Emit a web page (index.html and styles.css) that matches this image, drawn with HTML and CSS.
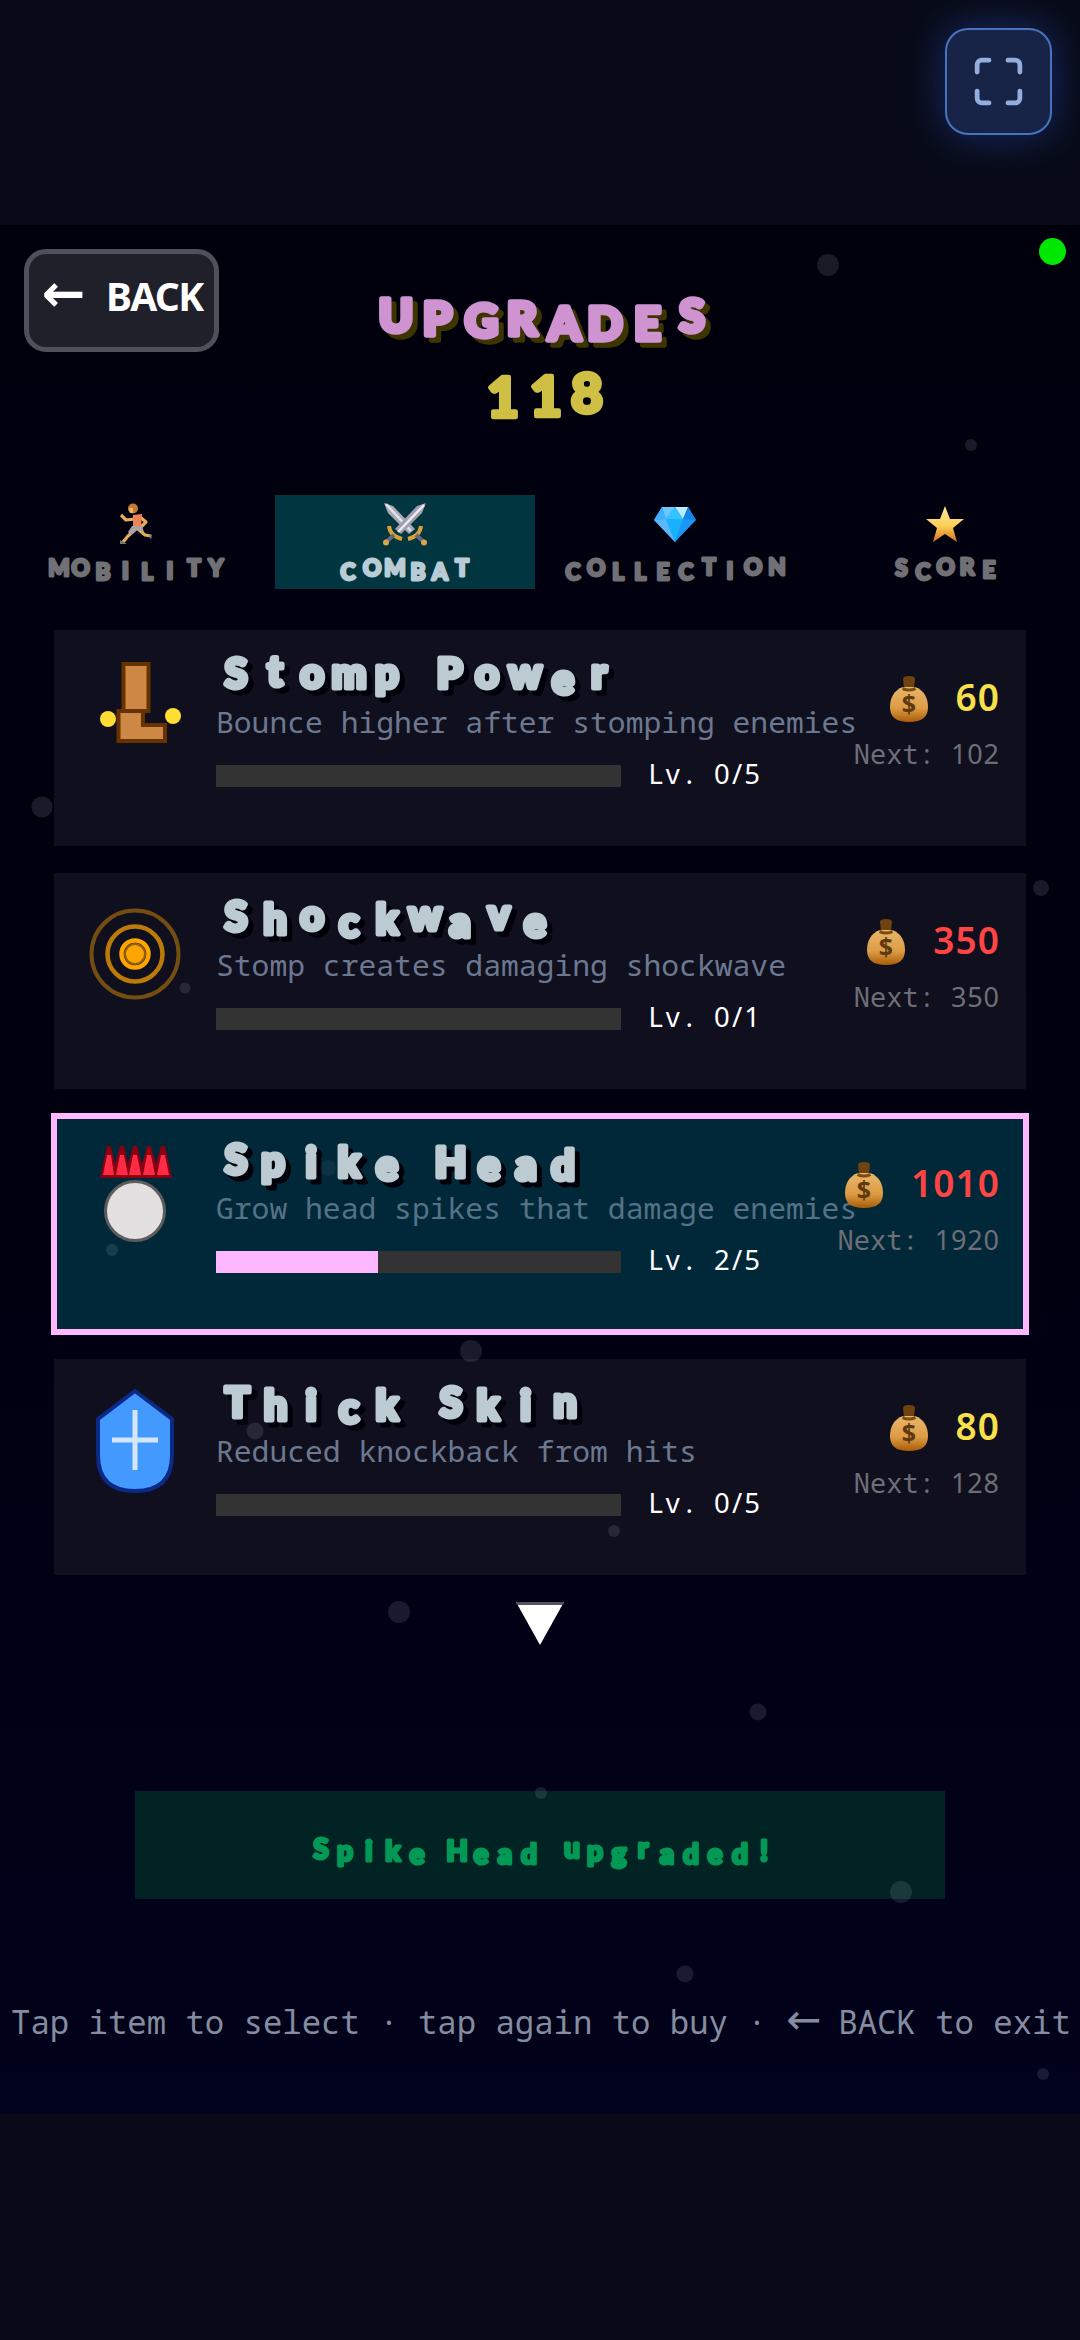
FILE: index.html
```html
<!DOCTYPE html>
<html lang="en">
<head>
<meta charset="utf-8">
<title>Upgrades</title>
<link rel="stylesheet" href="styles.css">
</head>
<body>
<svg class="defs" width="0" height="0">
  <linearGradient id="bagFill" x1="0" y1="0" x2="0" y2="1"><stop offset="0" stop-color="#e8b66b"/><stop offset=".6" stop-color="#dd9c45"/><stop offset="1" stop-color="#a85d08"/></linearGradient>
  <symbol id="bag" viewBox="0 0 40 46">
    <path d="M15 12L14 3Q14 0 20 0T26 3L25 12Z" fill="#6e4310"/>
    <path d="M14 11H26C35 14 39 22 39 31C39 41 33 46 20 46S1 41 1 31C1 22 5 14 14 11Z" fill="url(#bagFill)"/>
    <path d="M14 11q6 3 12 0l1 3q-7 3-14 0z" fill="#7a4c12"/>
  </symbol>
</svg>
<div class="topbar">
  <button class="fullscreen">
    <svg width="57" height="57" viewBox="0 0 24 24"><path d="M8 3H5a2 2 0 0 0-2 2v3M21 8V5a2 2 0 0 0-2-2h-3M3 16v3a2 2 0 0 0 2 2h3M16 21h3a2 2 0 0 0 2-2v-3"/></svg>
  </button>
</div>
<main class="game">
  <header class="head">
    <button class="back"><span class="arrow">←</span> <span class="caps">BACK</span></button>
    <div class="titles">
      <svg class="wobble title" width="360" height="128">
        <text x="36 77.500 121.500 162 204.500 245 287.500 332" y="107 110 112 110 115 115 115 107">UPGRADES</text>
      </svg>
      <svg class="wobble coins" width="360" height="80">
        <text x="143 186 227" y="64 63 60">118</text>
      </svg>
    </div>
    <span class="status"></span>
  </header>

  <nav class="tabs">
    <div class="tab">
      <svg width="44" height="44" viewBox="0 0 44 44">
        <path d="M22 17L13 18L8 13M27 15L33 20L28 25M24 26L15 34L10 40M25 27L32 33L38 34" fill="none" stroke="#e5ac5b" stroke-width="3.2" stroke-linejoin="round"/>
        <path d="M20 13L29 12L28 26L20 25Z" fill="#ee8455"/><path d="M19 24H29L31 30L24 28L18 33L15 30Z" fill="#a7a3a8"/>
        <circle cx="20" cy="6.500" r="5" fill="#c77a35"/><path d="M16 6H20V11H17Z" fill="#edb963"/><path d="M7 38l7 4H7zM36 32l3 1-1 5z" fill="#777"/>
      </svg>
      <svg class="wobble label" width="260" height="43"><text x="54 75.500 98 120.500 142 165 189 211" y="30 30 34 33 34 33 30 30">MOBILITY</text></svg>
    </div>
    <div class="tab active">
      <svg width="44" height="44" viewBox="0 0 44 44">
        <path d="M1 1L10 4L32 27L26 32L5 11Z" fill="#aaa9b8"/><path d="M3 2L28 29" stroke="#e2e2ea" stroke-width="2.500"/>
        <path d="M43 1L34 4L12 27L18 32L39 11Z" fill="#a09fae"/><path d="M41 3L15 30" stroke="#ecebf2" stroke-width="2.500"/>
        <path d="M6 24Q7 34 19 37M38 24Q37 34 25 37" fill="none" stroke="#d9a13c" stroke-width="4"/>
        <path d="M11 33L3 40M33 33L41 40" stroke="#666779" stroke-width="4"/><circle cx="3" cy="40.500" r="3" fill="#d8a54a"/><circle cx="41" cy="40.500" r="3" fill="#d8a54a"/>
      </svg>
      <svg class="wobble label" width="260" height="43"><text x="73 97 120 143 165 187" y="34 30 30 34 34 30">COMBAT</text></svg>
    </div>
    <div class="tab">
      <svg width="44" height="44" viewBox="0 0 44 44">
        <path d="M9 5H35L43 18L22 40L1 18Z" fill="#1d96f5"/><path d="M9 5L13 17L1 18Z" fill="#3db1ff"/><path d="M9 5H22L13 17Z" fill="#6cc9ff"/><path d="M22 5H35L30 17Z" fill="#b9ecff"/><path d="M22 5L30 17H13Z" fill="#35c3fb"/><path d="M35 5L43 18L30 17Z" fill="#1784e8"/><path d="M13 17H30L22 40Z" fill="#18b1fb"/><path d="M1 18L13 17L22 40Z" fill="#5bb7f8"/>
      </svg>
      <svg class="wobble label" width="260" height="43"><text x="28 51 73 95 118 141 164 185 208 232" y="34 30 34 34 34 34 29 33 29 29">COLLECTION</text></svg>
    </div>
    <div class="tab">
      <svg width="44" height="44" viewBox="0 0 44 44">
        <linearGradient id="starFill" x1="0" y1="0" x2="0" y2="1"><stop offset="0" stop-color="#fbe6a0"/><stop offset=".55" stop-color="#fad155"/><stop offset="1" stop-color="#d66d1c"/></linearGradient>
        <path d="M22 4L27 17H41L30 26L34 40L22 32L10 40L14 26L3 17H17Z" fill="url(#starFill)"/>
      </svg>
      <svg class="wobble label" width="260" height="43"><text x="86.500 108 130.500 152 174" y="30 34 29 29 32">SCORE</text></svg>
    </div>
  </nav>

  <section class="list">
    <article class="card">
      <svg class="icon" width="108" height="150">
        <g fill="#cc8844" stroke="#663300" stroke-width="4"><rect x="42.500" y="34" width="25" height="47"/><path d="M37.500 81H62V95H84V111H37.500Z"/></g>
        <circle cx="27" cy="89" r="8" fill="#ffdd33"/><circle cx="92" cy="86" r="8" fill="#ffdd33"/>
      </svg>
      <div class="body">
        <svg class="wobble name" width="440" height="73"><text x="20 59 96 133 171 200 233.500 271 309 347 383" y="58 56 58 58 58 58 58 58 58 64 58">Stomp Power</text></svg>
        <p class="desc">Bounce higher after stomping enemies</p>
        <div class="level"><div class="bar"></div><div>Lv. <span class="num">0/5</span></div></div>
      </div>
      <div class="cost">
        <div class="price ok"><svg width="40" height="46"><use href="#bag"/><text x="20" y="37">$</text></svg><span class="num">60</span></div>
        <div class="next">Next: <span class="num">102</span></div>
      </div>
    </article>

    <article class="card">
      <svg class="icon" width="108" height="150">
        <g fill="none" stroke="#ffa500"><circle cx="54" cy="81" r="43.500" stroke-width="4" opacity=".42"/><circle cx="54" cy="81" r="27.500" stroke-width="4.500" opacity=".72"/><circle cx="54" cy="81" r="13.500" stroke-width="4.500"/></g>
        <circle cx="54" cy="81" r="11" fill="#93600a"/><circle cx="54" cy="81" r="9" fill="#ffa500"/>
      </svg>
      <div class="body">
        <svg class="wobble name" width="440" height="73"><text x="20 59 96 133 171 209 244 283 319" y="58 61 57 64 61 57 64 56 64">Shockwave</text></svg>
        <p class="desc">Stomp creates damaging shockwave</p>
        <div class="level"><div class="bar"></div><div>Lv. <span class="num">0/1</span></div></div>
      </div>
      <div class="cost">
        <div class="price no"><svg width="40" height="46"><use href="#bag"/><text x="20" y="37">$</text></svg><span class="num">350</span></div>
        <div class="next">Next: <span class="num">350</span></div>
      </div>
    </article>

    <article class="card selected">
      <svg class="icon" width="108" height="150">
        <path d="M19 62L26 30H30L34 48L39 30H43L47 48L52 30H56L61 48L66 30H70L75 48L80 30H84L91 62Z" fill="#8a0012"/>
        <path d="M22 59L26 39H30L33 59ZM35 59L39 39H43L47 59ZM48 59L52 39H56L60 59ZM62 59L66 39H70L74 59ZM76 59L80 39H84L88 59Z" fill="#ff2a44"/>
        <circle cx="54" cy="95" r="29.500" fill="#e2e0e0" stroke="#5c5c5e" stroke-width="3"/>
      </svg>
      <div class="body">
        <svg class="wobble name" width="440" height="73"><text x="20 57 95 133 171 200 234.500 273 310 347" y="58 60 61 61 64 64 61 64 64 64">Spike Head</text></svg>
        <p class="desc">Grow head spikes that damage enemies</p>
        <div class="level"><div class="bar"><div class="fill" style="width:40%"></div></div><div>Lv. <span class="num">2/5</span></div></div>
      </div>
      <div class="cost">
        <div class="price no"><svg width="40" height="46"><use href="#bag"/><text x="20" y="37">$</text></svg><span class="num">1010</span></div>
        <div class="next">Next: <span class="num">1920</span></div>
      </div>
    </article>

    <article class="card">
      <svg class="icon" width="108" height="150">
        <path d="M54 32L91 60V96Q91 132 54 132Q17 132 17 96V60Z" fill="#4499ff" stroke="#0b2a86" stroke-width="4"/>
        <path d="M54 51V111M31 81H77" stroke="#d5e6f7" stroke-width="5"/>
      </svg>
      <div class="body">
        <svg class="wobble name" width="440" height="73"><text x="21.500 59.500 95 133 171 200 235 272 309.500 349" y="58 61 61 64 61 61 58 61 61 58">Thick Skin</text></svg>
        <p class="desc">Reduced knockback from hits</p>
        <div class="level"><div class="bar"></div><div>Lv. <span class="num">0/5</span></div></div>
      </div>
      <div class="cost">
        <div class="price ok"><svg width="40" height="46"><use href="#bag"/><text x="20" y="37">$</text></svg><span class="num">80</span></div>
        <div class="next">Next: <span class="num">128</span></div>
      </div>
    </article>
  </section>

  <svg class="more" width="48" height="43"><path d="M0 0H48L24 43Z" fill="#fff"/><path d="M0 0H48L47 3H1Z" fill="#55515f"/></svg>

  <div class="toast">
    <svg class="wobble" width="810" height="108"><text x="186 210 234 258 282 300 322 346 370 394 415 437 460 484 508 532 556 580 605 629" y="68 70 70 70 73 73 70 73 73 73 73 67 70 72 67 73 73 73 73 70">Spike Head upgraded!</text></svg>
  </div>

  <footer class="hint">Tap item to select · tap again to buy · <span class="arrow">←</span> BACK to exit</footer>

  <!-- drifting snow over the whole scene -->
  <svg class="snow" width="1080" height="1889" viewBox="0 225 1080 1889">
    <circle cx="828" cy="265" r="11"/><circle cx="971" cy="445" r="6"/><circle cx="42" cy="807" r="10.500"/><circle cx="1041" cy="888" r="8"/><circle cx="185" cy="988" r="5.500"/><circle cx="328" cy="1168" r="8" opacity=".5"/><circle cx="112" cy="1250" r="6"/><circle cx="471" cy="1351" r="11"/><circle cx="255" cy="1431" r="8.500"/><circle cx="614" cy="1531" r="6"/><circle cx="399" cy="1612" r="11"/><circle cx="758" cy="1712" r="8.500"/><circle cx="541" cy="1793" r="6"/><circle cx="901" cy="1892" r="11"/><circle cx="685" cy="1974" r="8.500"/><circle cx="1043" cy="2074" r="6"/>
  </svg>
</main>
</body>
</html>
```
FILE: styles.css
```css
* { box-sizing: border-box; }
body {
  margin: 0;
  width: 1080px;
  height: 2340px;
  background: #080b17;
  font-family: "Droid Sans Mono", "Noto Sans Mono", "DejaVu Sans Mono", monospace;
  color: #fff;
  overflow: hidden;
}
svg { display: block; flex: none; }
button { font: inherit; color: inherit; padding: 0; }
p { margin: 0; }
.defs { position: absolute; }

.topbar { height: 225px; display: flex; justify-content: flex-end; padding: 28px 28px 0 0; }
.fullscreen {
  width: 107px;
  height: 107px;
  display: flex;
  align-items: center;
  justify-content: center;
  border: 2px solid #4874be;
  border-radius: 23px;
  background: #182447;
  box-shadow: 0 0 40px rgba(50, 90, 230, .42);
}
.fullscreen path { fill: none; stroke: #93addd; stroke-width: 2; stroke-linecap: round; stroke-linejoin: round; }

.game {
  position: relative;
  height: 1889px;
  display: flex;
  flex-direction: column;
  background: linear-gradient(#00000d, #000010 50%, #01021b);
}
.head { height: 270px; display: grid; grid-template-columns: 360px 360px 360px; }
.back {
  width: 195px;
  height: 103px;
  margin: 24px 0 0 24px;
  padding: 0 0 10px 1px;
  border: 5px solid #50505b;
  border-radius: 22px;
  background: #20202b;
  font-size: 40px;
  font-weight: 700;
  white-space: pre;
}
/* proportional faces tracked out to the monospace pitch */
.caps { font-family: "Noto Sans", sans-serif; font-size: 39px; font-weight: 700; letter-spacing: -1.6px; }
.num { font-family: "Noto Sans", sans-serif; letter-spacing: .03em; margin-right: -.03em; }
.level .num { letter-spacing: .08em; }
.arrow {
  display: inline-block;
  width: .78em;
  font-family: "DejaVu Sans", sans-serif;
  font-size: 1.3em;
  line-height: 0;
}
.titles { display: flex; flex-direction: column; }
.status { justify-self: end; width: 27px; height: 27px; margin: 13px 14px 0 0; border-radius: 50%; background: #00e800; }

/* chunky lettering, each glyph set on its own baseline */
.wobble { overflow: visible; }
.wobble text {
  font-family: "Lato", sans-serif;
  font-weight: 900;
  text-anchor: middle;
  stroke-linejoin: round;
  fill: currentColor;
  stroke: currentColor;
}
.title { color: #cf93d1; }
.title text { font-size: 46px; stroke-width: 5.5px; filter: drop-shadow(5px 5px 0 #3d3500); }
.coins { color: #cfbf45; }
.coins text { font-size: 55px; stroke-width: 4.5px; }
.label text { font-size: 22.5px; stroke-width: 2.8px; }
.name { color: #bccbd2; }
.name text { font-size: 41px; stroke-width: 5px; filter: drop-shadow(5px 5px 0 #000008); }

.tabs { display: flex; gap: 10px; padding: 0 5px; height: 94px; }
.tab { width: 260px; padding-top: 7px; display: flex; flex-direction: column; align-items: center; color: #707075; }
.tab.active { background: #013540; color: #b9cbd4; }

.list { display: flex; flex-direction: column; gap: 27px; margin: 41px 54px 0; }
.card { height: 216px; display: flex; padding: 0 27px; background: #0f0f1e; }
.card.selected { background: #012838; outline: 6px solid #ffb8ff; outline-offset: -3px; }
.body { width: 540px; margin-left: 27px; white-space: nowrap; }
.desc { height: 40px; font-size: 29.7px; line-height: 37px; color: #6c7890; }
.selected .desc { color: #557286; }
.level { display: flex; gap: 27px; height: 22px; margin-top: 22px; font-size: 27.5px; line-height: 18px; }
.bar { flex: none; width: 405px; height: 22px; background: #333; }
.fill { height: 22px; background: #ffb8ff; }
.cost { flex: 1; display: flex; flex-direction: column; align-items: flex-end; padding-top: 46px; white-space: nowrap; }
.price { display: flex; gap: 27px; height: 46px; font-size: 37px; font-weight: 600; line-height: 42px; }
.price text { font: 700 25px "Noto Sans", sans-serif; text-anchor: middle; fill: #5f3a10; }
.ok { color: #f7e04b; }
.no { color: #ff4444; }
.next { margin-top: 19px; font-size: 27px; line-height: 26px; color: #6e6e76; }

.more { margin: 27px auto 0; }
.toast { width: 810px; height: 108px; margin: 146px auto 0; background: #012324; color: #029855; }
.toast text { font-size: 28px; stroke-width: 3px; }
.hint { margin-top: 102px; padding-left: 11px; font-size: 32.3px; line-height: 40px; color: #858c9f; white-space: nowrap; }
.snow { position: absolute; left: 0; top: 0; fill: rgba(235, 235, 255, .11); pointer-events: none; }
```
